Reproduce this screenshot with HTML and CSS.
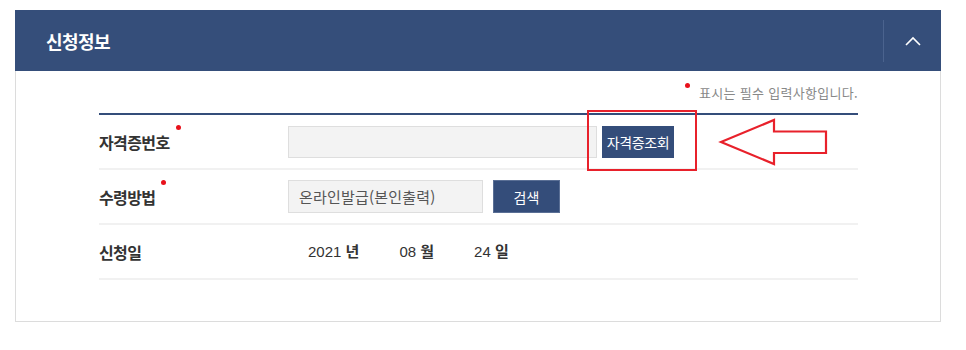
FILE: index.html
```html
<!DOCTYPE html>
<html lang="ko">
<head>
<meta charset="utf-8">
<title>신청정보</title>
<link rel="stylesheet" href="styles.css">
</head>
<body>
<section class="panel">
  <header class="panel-head">
    <h2 class="panel-title">신청정보</h2>
    <button class="toggle" type="button" aria-label="접기">
      <svg width="16" height="10" viewBox="0 0 16 10"><polyline points="1,9 8,2 15,9" fill="none" stroke="#fff" stroke-width="1.6"/></svg>
    </button>
  </header>
  <div class="panel-body">
    <p class="req-note"><span class="dot"></span>표시는 필수 입력사항입니다.</p>
    <div class="form">
      <div class="row">
        <div class="label">자격증번호<span class="dot req"></span></div>
        <div class="value">
          <input class="text-input" type="text">
          <button class="btn btn-lookup" type="button">자격증조회</button>
        </div>
      </div>
      <div class="row">
        <div class="label">수령방법<span class="dot req"></span></div>
        <div class="value">
          <div class="select-box">온라인발급(본인출력)</div>
          <button class="btn btn-search" type="button">검색</button>
        </div>
      </div>
      <div class="row">
        <div class="label">신청일</div>
        <div class="value dates">
          <span class="date-part"><span class="num">2021</span> <b>년</b></span>
          <span class="date-part"><span class="num">08</span> <b>월</b></span>
          <span class="date-part"><span class="num">24</span> <b>일</b></span>
        </div>
      </div>
    </div>
    <div class="highlight-box"></div>
    <svg class="arrow" width="112" height="52" viewBox="0 0 112 52">
      <polygon points="3,25 56,3 56,14.5 108,14.5 108,36 56,36 56,47" fill="#fff" stroke="#e8212b" stroke-width="2.2" stroke-linejoin="miter"/>
    </svg>
  </div>
</section>
</body>
</html>
```

FILE: styles.css
```css
* { box-sizing: border-box; }
html, body { margin: 0; padding: 0; background: #fff; }
body {
  font-family: "Noto Sans CJK KR", "Noto Sans", sans-serif;
  color: #333;
  padding: 10px 0 0 15px;
}
.panel {
  width: 926px;
  position: relative;
}
.panel-head {
  height: 61px;
  background: #354e7a;
  display: flex;
  align-items: center;
  justify-content: space-between;
}
.panel-title {
  margin: 0 0 0 31px;
  font-size: 18px;
  font-weight: 700;
  color: #fff;
  letter-spacing: -0.6px;
  line-height: 22px;
}
.toggle {
  width: 58px;
  height: 42px;
  border: 0;
  border-left: 1px solid #4b638e;
  background: transparent;
  padding: 0;
  display: flex;
  align-items: center;
  justify-content: center;
}
.toggle svg { display: block; margin-top: 0; }
.panel-body {
  border: 1px solid #dcdcdc;
  border-top: 0;
  padding: 12px 82px 41px 83px;
  position: relative;
}
.req-note {
  margin: 0 0 10px;
  text-align: right;
  font-size: 13px;
  line-height: 20px;
  color: #888;
  letter-spacing: 0.3px;
}
.dot {
  display: inline-block;
  width: 5px;
  height: 5px;
  border-radius: 50%;
  background: #e8111b;
  vertical-align: 10px;
  margin-right: 9px;
}
.form { border-top: 2px solid #344d7a; }
.row {
  display: flex;
  align-items: center;
  height: 55px;
  border-bottom: 2px solid #f1f1f1;
}
.label {
  width: 189px;
  flex: none;
  font-size: 16px;
  font-weight: 700;
  color: #333;
  letter-spacing: -0.6px;
  line-height: 20px;
}
.label .req {
  margin: -7px 0 0 6px;
  vertical-align: top;
}
.value {
  display: flex;
  align-items: center;
}
.text-input {
  width: 309px;
  height: 32px;
  background: #f3f3f3;
  border: 1px solid #dedede;
  margin: 0;
  padding: 0 8px;
  font: inherit;
}
.btn {
  border: 0;
  background: #344d7a;
  color: #fff;
  font-family: inherit;
  font-size: 13px;
  padding: 0;
  margin: 0;
}
.btn-lookup {
  width: 72px;
  height: 32px;
  margin-left: 5px;
  font-size: 14px;
  letter-spacing: -0.4px;
}
.select-box {
  width: 195px;
  height: 33px;
  background: #f3f3f3;
  border: 1px solid #dedede;
  padding-left: 10px;
  font-size: 15px;
  line-height: 31px;
  color: #555;
  letter-spacing: 0.2px;
}
.btn-search {
  width: 67px;
  height: 33px;
  margin-left: 10px;
  border: 1px solid #5a6f95;
  font-size: 14px;
}
.dates { padding-left: 20px; gap: 40px; font-size: 15px; }
.date-part { line-height: 20px; }
.date-part .num { font-family: "Liberation Sans", Arial, sans-serif; }
.date-part b { font-weight: 700; }
.highlight-box {
  position: absolute;
  left: 571px;
  top: 39px;
  width: 110px;
  height: 61px;
  border: 2px solid #e8212b;
}
.arrow {
  position: absolute;
  left: 702px;
  top: 46px;
}
```
